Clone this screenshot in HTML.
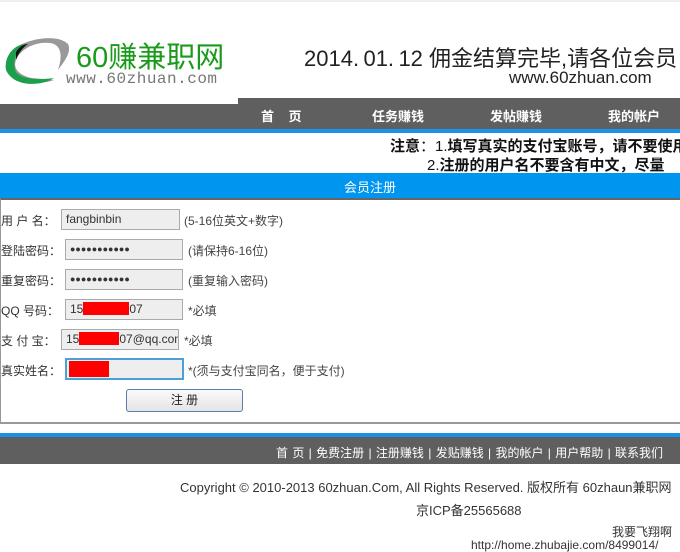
<!DOCTYPE html>
<html><head><meta charset="utf-8"><style>
*{margin:0;padding:0;box-sizing:border-box}
body{width:680px;height:552px;background:#fff;position:relative;overflow:hidden;font-family:"Liberation Sans","Noto Sans CJK SC",sans-serif;font-size:12px;color:#333}
.a{position:absolute;white-space:nowrap}
.inp{position:absolute;height:21px;background:#eee;border:1px solid #aaa;font-size:12px;line-height:19px;padding-left:4px;color:#333;overflow:hidden;white-space:nowrap}
.lbl{position:absolute;left:1px;font-size:12px;color:#333}
.tip{position:absolute;font-size:12px;color:#444;white-space:nowrap}
.nav{position:absolute;top:106px;font-size:13px;color:#fff;font-weight:bold;white-space:nowrap}
</style></head><body>
<div class="a" style="left:0;top:0;width:680px;height:2px;background:#eee"></div>
<svg class="a" style="left:2px;top:32px" width="70" height="60" viewBox="0 0 70 60">
<path d="M18 48 C0 44 2 22 16 14 C30 6 56 2 66 12 C70 20 62 30 56 38 C60 26 60 16 52 12 C40 8 20 14 14 28 C10 38 20 44 30 46 L52 48 C40 52 28 52 18 48Z" fill="#999"/>
<path d="M4 38 C2 26 10 14 22 12 C14 20 10 30 14 40 C20 48 38 48 52 46 C40 54 12 56 4 38Z" fill="#1aa04a"/>
<path d="M14 20 C18 14 22 12 26 12 C20 16 16 22 14 28Z" fill="#111"/>
</svg>
<div class="a" style="left:76px;top:34px;font-size:29px;color:#1a9a1a">60赚兼职网</div>
<div class="a" style="left:66px;top:70px;font-size:16px;color:#777;font-family:'Liberation Mono',monospace;letter-spacing:0.5px">www.60zhuan.com</div>
<div class="a" style="left:304px;top:41px;font-size:22px;color:#222">2014.&thinsp;01.&thinsp;12 佣金结算完毕,请各位会员</div>
<div class="a" style="left:509px;top:68px;font-size:17px;color:#222">www.60zhuan.com</div>
<div class="a" style="left:0;top:104px;width:680px;height:25px;background:#5f5f5f"></div>
<div class="a" style="left:238px;top:98px;width:442px;height:8px;background:#5f5f5f"></div>
<div class="a" style="left:0;top:129px;width:680px;height:4px;background:#1993e8"></div>
<div class="nav" style="left:261px">首&nbsp;&nbsp;&nbsp;&nbsp;页</div>
<div class="nav" style="left:372px">任务赚钱</div>
<div class="nav" style="left:490px">发帖赚钱</div>
<div class="nav" style="left:608px">我的帐户</div>
<div class="a" style="left:390px;top:135px;font-size:15px;color:#111"><b>注意</b>：1.<b>填写真实的支付宝账号，请不要使用</b></div>
<div class="a" style="left:427px;top:154px;font-size:15px;color:#111">2.<b>注册的用户名不要含有中文，尽量</b></div>
<div class="a" style="left:0;top:173px;width:680px;height:25px;background:#0096f0"></div>
<div class="a" style="left:344px;top:177px;font-size:13px;color:#fff">会员注册</div>
<div class="a" style="left:0;top:198px;width:680px;height:226px;border-top:2px solid #666;border-left:1px solid #999;border-bottom:2px solid #999"></div>
<div class="lbl" style="top:212px">用 户 名：</div>
<div class="inp" style="left:61px;top:209px;width:119px">fangbinbin</div>
<div class="tip" style="left:184px;top:212px">(5-16位英文+数字)</div>
<div class="lbl" style="top:242px">登陆密码：</div>
<div class="inp" style="left:65px;top:239px;width:118px;font-size:9px">●●●●●●●●●●●</div>
<div class="tip" style="left:188px;top:242px">(请保持6-16位)</div>
<div class="lbl" style="top:272px">重复密码：</div>
<div class="inp" style="left:65px;top:269px;width:118px;font-size:9px">●●●●●●●●●●●</div>
<div class="tip" style="left:188px;top:272px">(重复输入密码)</div>
<div class="lbl" style="top:302px">QQ 号码：</div>
<div class="inp" style="left:65px;top:299px;width:118px">15<span style="display:inline-block;width:46px;height:13px;background:#f00;vertical-align:-2px"></span>07</div>
<div class="tip" style="left:188px;top:302px">*必填</div>
<div class="lbl" style="top:332px">支 付 宝：</div>
<div class="inp" style="left:61px;top:329px;width:118px">15<span style="display:inline-block;width:40px;height:13px;background:#f00;vertical-align:-2px"></span>07@qq.com</div>
<div class="tip" style="left:184px;top:332px">*必填</div>
<div class="lbl" style="top:362px">真实姓名：</div>
<div class="inp" style="left:65px;top:358px;width:119px;height:22px;border:2px solid #4aa0d8;padding-left:2px"><span style="display:inline-block;width:40px;height:16px;background:#f00;vertical-align:top;margin-top:1px"></span></div>
<div class="tip" style="left:188px;top:362px">*(须与支付宝同名，便于支付)</div>
<div class="a" style="left:126px;top:389px;width:117px;height:23px;border:1px solid #5a7fa8;border-radius:3px;background:linear-gradient(#fafafa,#e4e4e4);text-align:center;line-height:21px;font-size:12px;color:#222">注 册</div>
<div class="a" style="left:0;top:433px;width:680px;height:4px;background:#1993e8"></div>
<div class="a" style="left:0;top:437px;width:680px;height:27px;background:#5f5f5f"></div>
<div class="a" style="left:276px;top:444px;font-size:12px;color:#fff;word-spacing:1px">首 页 | 免费注册 | 注册赚钱 | 发贴赚钱 | 我的帐户 | 用户帮助 | 联系我们</div>
<div class="a" style="left:180px;top:477px;font-size:13px;color:#333">Copyright © 2010-2013 60zhuan.Com, All Rights Reserved. 版权所有 60zhaun兼职网</div>
<div class="a" style="left:416px;top:500px;font-size:13px;color:#333">京ICP备25565688</div>
<div class="a" style="left:612px;top:523px;font-size:12px;color:#333">我要飞翔啊</div>
<div class="a" style="left:471px;top:538px;font-size:12px;color:#333">http://home.zhubajie.com/8499014/</div>
</body></html>
